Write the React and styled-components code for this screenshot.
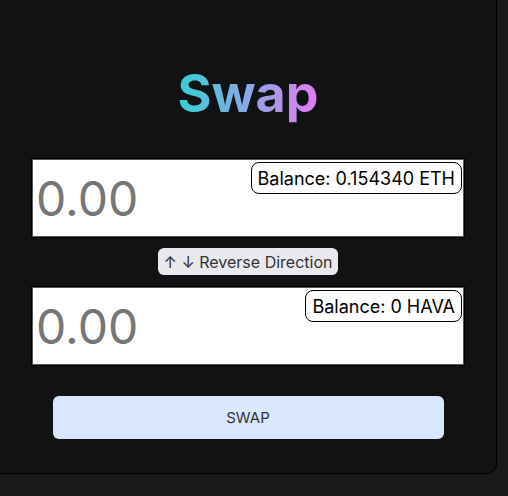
import React from 'react'
import styled, { createGlobalStyle } from 'styled-components'

const GlobalStyle = createGlobalStyle`
  html, body {
    margin: 0;
    padding: 0;
    background: #18191b;
    font-family: Inter, "Noto Sans", sans-serif;
    overflow: hidden;
  }
`

const Page = styled.div`
  width: 508px;
  height: 496px;
  overflow: hidden;
`

const Card = styled.section`
  box-sizing: border-box;
  width: 506px;
  margin: -20px 0 0 -9px;
  padding: 82px 33px 34px 41px;
  background: #111214;
  border: 1px solid #000;
  border-radius: 10px;
  display: flex;
  flex-direction: column;
  align-items: center;
`

const Title = styled.h1`
  margin: 0 0 34px;
  font-size: 52px;
  line-height: 62px;
  font-weight: 700;
  background: linear-gradient(90deg, #33d0d4 0%, #8aa8e4 50%, #e47af2 100%);
  -webkit-background-clip: text;
  background-clip: text;
  color: transparent;
`

const Field = styled.div`
  position: relative;
  width: 432px;
  height: 78px;
  box-sizing: border-box;
  background: #fff;
  border: 1px solid #5a5a5a;
  box-shadow: 0 0 0 1px #000;
`

const AmountInput = styled.input`
  box-sizing: border-box;
  width: 100%;
  height: 100%;
  border: none;
  outline: none;
  padding: 0 0 0 3px;
  font-family: Inter, "Noto Sans", sans-serif;
  font-size: 48px;
  color: #222;
  background: transparent;

  &::placeholder {
    color: #767676;
  }
`

const Balance = styled.div`
  position: absolute;
  top: 2px;
  right: 1px;
  height: 32px;
  box-sizing: border-box;
  display: flex;
  align-items: center;
  padding: 0 6px;
  border: 1px solid #000;
  border-radius: 8px;
  background: #fff;
  color: #000;
  font-size: 18px;
`

const ReverseButton = styled.button`
  margin: 11px 0 12px;
  height: 27px;
  padding: 0 6px;
  border: none;
  border-radius: 6px;
  background: #e9e9ed;
  color: #333;
  font-family: Inter, "Noto Sans", sans-serif;
  font-size: 16px;
`

const SwapButton = styled.button`
  margin-top: 31px;
  width: 391px;
  height: 43px;
  border: none;
  border-radius: 6px;
  background: #d9e6ff;
  color: #333;
  font-family: Inter, "Noto Sans", sans-serif;
  font-size: 15px;
`

const AmountField = ({ balance }) => (
  <Field>
    <AmountInput placeholder="0.00" />
    <Balance>Balance: {balance}</Balance>
  </Field>
)

export default function App() {
  return (
    <Page>
      <GlobalStyle />
      <Card>
        <Title>Swap</Title>
        <AmountField balance="0.154340 ETH" />
        <ReverseButton>↑ ↓ Reverse Direction</ReverseButton>
        <AmountField balance="0 HAVA" />
        <SwapButton>SWAP</SwapButton>
      </Card>
    </Page>
  )
}
